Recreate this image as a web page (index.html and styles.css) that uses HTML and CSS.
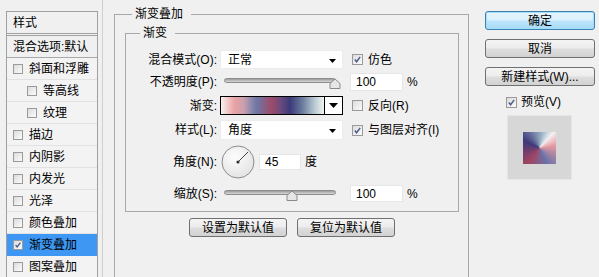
FILE: index.html
```html
<!DOCTYPE html>
<html lang="zh-CN">
<head>
  <meta charset="UTF-8">
  <title>图层样式</title>
  <link rel="stylesheet" href="styles.css">
</head>
<body>
  <div class="side">
    <div class="list">
      <div class="head">样式</div>
      <div class="item blend">混合选项:默认</div>
      <div class="item"><span class="cb"></span>斜面和浮雕</div>
      <div class="item sub"><span class="cb"></span>等高线</div>
      <div class="item sub"><span class="cb"></span>纹理</div>
      <div class="item"><span class="cb"></span>描边</div>
      <div class="item"><span class="cb"></span>内阴影</div>
      <div class="item"><span class="cb"></span>内发光</div>
      <div class="item"><span class="cb"></span>光泽</div>
      <div class="item"><span class="cb"></span>颜色叠加</div>
      <div class="item active"><span class="cb on"><svg viewBox="0 0 10 10"><path d="M2 5 L4 7.5 L8 2"/></svg></span>渐变叠加</div>
      <div class="item"><span class="cb"></span>图案叠加</div>
    </div>
  </div>

  <div class="main">
    <fieldset class="outer">
      <legend>渐变叠加</legend>
      <fieldset class="inner">
        <legend>渐变</legend>

        <div class="row r1">
          <span class="lbl">混合模式(O):</span>
          <div class="dd">正常<svg class="arr" viewBox="0 0 7 4"><path d="M0 0 H7 L3.5 4 Z"/></svg></div>
          <span class="chk"><span class="cb on"><svg viewBox="0 0 10 10"><path d="M2 5 L4 7.5 L8 2"/></svg></span>仿色</span>
        </div>

        <div class="row r2">
          <span class="lbl">不透明度(P):</span>
          <div class="slider"><div class="track"><svg class="thumb" style="left: 100%" viewBox="0 0 12 11"><path d="M1 10.5 V5.5 L6 1 L11 5.5 V10.5 Z"/></svg></div></div>
          <span class="num">100</span><span class="pct">%</span>
        </div>

        <div class="row r3">
          <span class="lbl">渐变:</span>
          <div class="grad"><div class="bar"></div><div class="gbtn"><svg viewBox="0 0 9 5"><path d="M0 0 H9 L4.5 5 Z"/></svg></div></div>
          <span class="chk"><span class="cb"></span>反向(R)</span>
        </div>

        <div class="row r4">
          <span class="lbl">样式(L):</span>
          <div class="dd">角度<svg class="arr" viewBox="0 0 7 4"><path d="M0 0 H7 L3.5 4 Z"/></svg></div>
          <span class="chk"><span class="cb on"><svg viewBox="0 0 10 10"><path d="M2 5 L4 7.5 L8 2"/></svg></span>与图层对齐(I)</span>
        </div>

        <div class="row r5">
          <span class="lbl">角度(N):</span>
          <svg class="dial" viewBox="0 0 34 34">
            <defs>
              <radialGradient id="dialbg" cx="40%" cy="35%" r="70%">
                <stop offset="0" stop-color="#fdfdfd"/>
                <stop offset="1" stop-color="#e2e2e2"/>
              </radialGradient>
            </defs>
            <circle cx="17" cy="17" r="16" fill="url(#dialbg)" stroke="#8c8c8c"/>
            <line x1="17" y1="17" x2="27" y2="7" stroke="#444" stroke-width="1"/>
            <circle cx="17" cy="17" r="1.6" fill="#333"/>
          </svg>
          <span class="num ang">45</span><span class="deg">度</span>
        </div>

        <div class="row r6">
          <span class="lbl">缩放(S):</span>
          <div class="slider"><div class="track"><svg class="thumb" style="left: 61%" viewBox="0 0 12 11"><path d="M1 10.5 V5.5 L6 1 L11 5.5 V10.5 Z"/></svg></div></div>
          <span class="num">100</span><span class="pct">%</span>
        </div>
      </fieldset>

      <div class="btns">
        <button class="btn wide">设置为默认值</button>
        <button class="btn wide">复位为默认值</button>
      </div>
    </fieldset>
  </div>

  <div class="right">
    <button class="btn def">确定</button>
    <button class="btn">取消</button>
    <button class="btn">新建样式(W)...</button>
    <div class="prev"><span class="cb on"><svg viewBox="0 0 10 10"><path d="M2 5 L4 7.5 L8 2"/></svg></span>预览(V)</div>
    <div class="pbox"><div class="swatch"></div></div>
  </div>
</body>
</html>
```

FILE: styles.css
```css
body {
  margin: 0;
  height: 277px;
  overflow: hidden;
  display: flex;
  align-items: flex-start;
  background-color: #f0f0f0;
  color: #000;
  font-family: "Liberation Sans", "Noto Sans CJK SC", sans-serif;
  font-size: 12px;
  line-height: 16px;
}

/* left style list */
.side {
  margin-left: 6px;
  padding-right: 4px;
  border-right: 1px solid #cfcfcf;
  height: 277px;
  box-sizing: border-box;
}

.list {
  margin-top: 11px;
  width: 92px;
  height: 266px;
  box-sizing: border-box;
  border: 1px solid #a0a0a0;
  border-bottom: none;
  background: #f0f0f0;
  overflow: hidden;
  white-space: nowrap;
}

.head {
  height: 24px;
  box-sizing: border-box;
  padding: 3px 0 0 6px;
  border-bottom: 3px double #a0a0a0;
}

.item {
  height: 22px;
  box-sizing: border-box;
  display: flex;
  align-items: center;
  padding-left: 6px;
  border-bottom: 1px solid #e2e2e2;
  background: #f3f3f3;
}

.item.blend {
  border-bottom-color: #a8a8a8;
  background: #f0f0f0;
}

.item.sub {
  padding-left: 20px;
}

.item.active {
  background: #3d97f3;
  border-bottom-color: #3d97f3;
}

.item .cb {
  width: 10px;
  height: 10px;
  margin-right: 6px;
}

/* checkbox */
.cb {
  display: inline-block;
  width: 11px;
  height: 11px;
  box-sizing: border-box;
  border: 1px solid #9a9a9a;
  background: linear-gradient(135deg, #dcdcdc, #fbfbfb);
  flex: none;
}

.cb svg {
  display: block;
  width: 100%;
  height: 100%;
}

.cb path {
  fill: none;
  stroke: #4a5c8c;
  stroke-width: 1.6;
}

/* main group boxes */
.main {
  margin-left: 11px;
  margin-top: 6px;
}

fieldset {
  margin: 0;
  border: 1px solid #a7a7a7;
}

legend {
  line-height: 16px;
  padding: 0 8px 0 3px;
}

.outer {
  width: 355px;
  height: 271px;
  box-sizing: border-box;
  padding: 3px 9px 0 10px;
  border-bottom: none;
}

.outer > legend {
  margin-left: 7px;
}

.inner {
  width: 334px;
  box-sizing: border-box;
  padding: 9px 0 9px 0;
}

.inner > legend {
  margin-left: 14px;
}

.row {
  display: flex;
  align-items: center;
}

.r1 { height: 19px; }
.r2 { height: 18px; margin-top: 4px; }
.r3 { height: 19px; margin-top: 5px; }
.r4 { height: 20px; margin-top: 5px; }
.r5 { height: 34px; margin-top: 5px; }
.r6 { height: 17px; margin-top: 6px; }

.lbl {
  width: 91px;
  margin-right: 3px;
  text-align: right;
  white-space: nowrap;
}

.dd {
  position: relative;
  width: 123px;
  height: 19px;
  box-sizing: border-box;
  padding-left: 7px;
  line-height: 18px;
  background: #fff;
  border: 1px solid #ececec;
}

.r4 .dd {
  height: 20px;
  line-height: 19px;
}

.arr {
  position: absolute;
  right: 6px;
  top: 8px;
  width: 7px;
  height: 4px;
}

.chk {
  display: flex;
  align-items: center;
  margin-left: 9px;
  white-space: nowrap;
}

.chk .cb {
  margin-right: 5px;
}

/* sliders */
.slider {
  width: 123px;
  height: 18px;
}

.track {
  position: relative;
  margin: 5px 0 0 4px;
  width: 112px;
  height: 5px;
  box-sizing: border-box;
  border: 1px solid #8c8c8c;
  border-radius: 3px;
  background: linear-gradient(#9c9c9c, #d8d8d8);
}

.thumb {
  position: absolute;
  top: -1px;
  width: 12px;
  height: 11px;
  margin-left: -6px;
}

.thumb path {
  fill: #e6e6e6;
  stroke: #8a8a8a;
}

.num {
  width: 53px;
  height: 18px;
  box-sizing: border-box;
  margin-left: 7px;
  padding-left: 5px;
  line-height: 17px;
  background: #fff;
  border: 1px solid #e6e6e6;
}

.r6 .num {
  height: 17px;
  line-height: 16px;
}

.pct {
  margin-left: 4px;
}

/* gradient picker */
.grad {
  display: flex;
  width: 123px;
  height: 19px;
  box-sizing: border-box;
  border: 1px solid #000;
  background: #fff;
}

.bar {
  flex: 1;
  background: linear-gradient(to right,
    #f7f0ef 0%, #eaa2a2 13%, #c9a0ae 22%, #6c79a9 34%,
    #9d4b69 49%, #6a4a7c 58%, #3b3a79 67%, #6a7b9d 79%,
    #b9cad2 91%, #f2f4f2 100%);
}

.gbtn {
  width: 17px;
  border-left: 1px solid #000;
  display: flex;
  align-items: center;
  justify-content: center;
}

.gbtn svg {
  width: 9px;
  height: 5px;
}

/* angle */
.dial {
  width: 34px;
  height: 34px;
  margin-left: 1px;
}

.num.ang {
  width: 42px;
  height: 16px;
  line-height: 15px;
  margin-left: 4px;
}

.deg {
  margin-left: 4px;
}

/* buttons */
.btn {
  height: 19px;
  padding: 0;
  box-sizing: border-box;
  border: 1px solid #707070;
  border-radius: 3px;
  background: linear-gradient(#f4f4f4 0%, #ececec 48%, #dedede 52%, #d2d2d2 100%);
  font-family: "Liberation Sans", "Noto Sans CJK SC", sans-serif;
  font-size: 12px;
  line-height: 16px;
  color: #000;
}

.btns {
  display: flex;
  justify-content: center;
  gap: 10px;
  margin-top: 6px;
}

.btn.wide {
  width: 98px;
}

.right {
  margin-left: 16px;
  margin-top: 11px;
  width: 110px;
  display: flex;
  flex-direction: column;
}

.right .btn {
  width: 110px;
  margin-bottom: 9px;
}

.btn.def {
  border-color: #3c7fb1;
  background: linear-gradient(#e9f6fd 0%, #d9f0fc 48%, #bee6fd 52%, #a7d9f5 100%);
  box-shadow: inset 0 0 0 1px #9fe0fb;
}

.prev {
  display: flex;
  align-items: center;
  height: 14px;
  margin-left: 21px;
}

.prev .cb {
  margin-right: 4px;
}

.pbox {
  margin: 6px 0 0 22px;
  width: 65px;
  height: 65px;
  box-sizing: border-box;
  border: 1px solid #e6e6e6;
  background: #d7d7d7;
  display: flex;
  align-items: center;
  justify-content: center;
}

.swatch {
  width: 33px;
  height: 32px;
  background: conic-gradient(from 45deg,
    #f3e6e8, #e49aa0 10%, #6a72a8 30%, #a04462 48%,
    #3e3a7a 70%, #9cb2c6 90%, #f6f6f6);
}
```
